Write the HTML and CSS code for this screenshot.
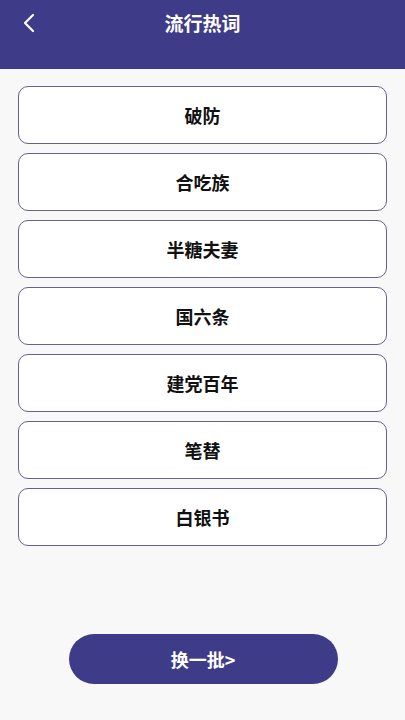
FILE: index.html
```html
<!DOCTYPE html>
<html lang="zh">
<head>
<meta charset="utf-8">
<link rel="stylesheet" href="styles.css">
</head>
<body>
<div class="page">
  <header class="topbar">
    <svg class="back" width="14" height="20" viewBox="0 0 14 20"><path d="M11 2 L3 10 L11 18" fill="none" stroke="#fff" stroke-width="2.2" stroke-linecap="round" stroke-linejoin="round"/></svg>
    <h1 class="title">流行热词</h1>
  </header>
  <main class="list">
    <div class="item">破防</div>
    <div class="item">合吃族</div>
    <div class="item">半糖夫妻</div>
    <div class="item">国六条</div>
    <div class="item">建党百年</div>
    <div class="item">笔替</div>
    <div class="item">白银书</div>
  </main>
  <div class="footer">
    <button class="refresh">换一批&gt;</button>
  </div>
</div>
</body>
</html>
```
FILE: styles.css
```css
* { box-sizing: border-box; }
html, body { margin: 0; padding: 0; }
body {
  background: #f8f8f8;
  font-family: "Noto Sans CJK SC", "Noto Sans", sans-serif;
  width: 405px;
  height: 720px;
  overflow: hidden;
}
.page { display: flex; flex-direction: column; height: 720px; }
.topbar {
  height: 69px;
  background: #3e3b89;
  position: relative;
  display: flex;
  justify-content: center;
  padding-top: 9px;
}
.back { position: absolute; left: 22px; top: 13px; }
.title {
  margin: 0;
  color: #fff;
  font-size: 19px;
  font-weight: 700;
  line-height: 28px;
}
.list {
  display: flex;
  flex-direction: column;
  gap: 9px;
  padding: 17px 18px 0 18px;
}
.item {
  height: 58px;
  border: 1.3px solid #66618f;
  border-radius: 10px;
  background: #fff;
  display: flex;
  align-items: center;
  justify-content: center;
  font-size: 18px;
  font-weight: 700;
  color: #111;
}
.footer {
  margin-top: auto;
  padding-bottom: 36px;
  display: flex;
  justify-content: center;
}
.refresh {
  width: 269px;
  height: 50px;
  border: none;
  border-radius: 25px;
  background: #3e3b89;
  color: #fff;
  font-family: "Noto Sans CJK SC", "Noto Sans", sans-serif;
  font-size: 18px;
  font-weight: 700;
  margin-left: 1px;
}
```
